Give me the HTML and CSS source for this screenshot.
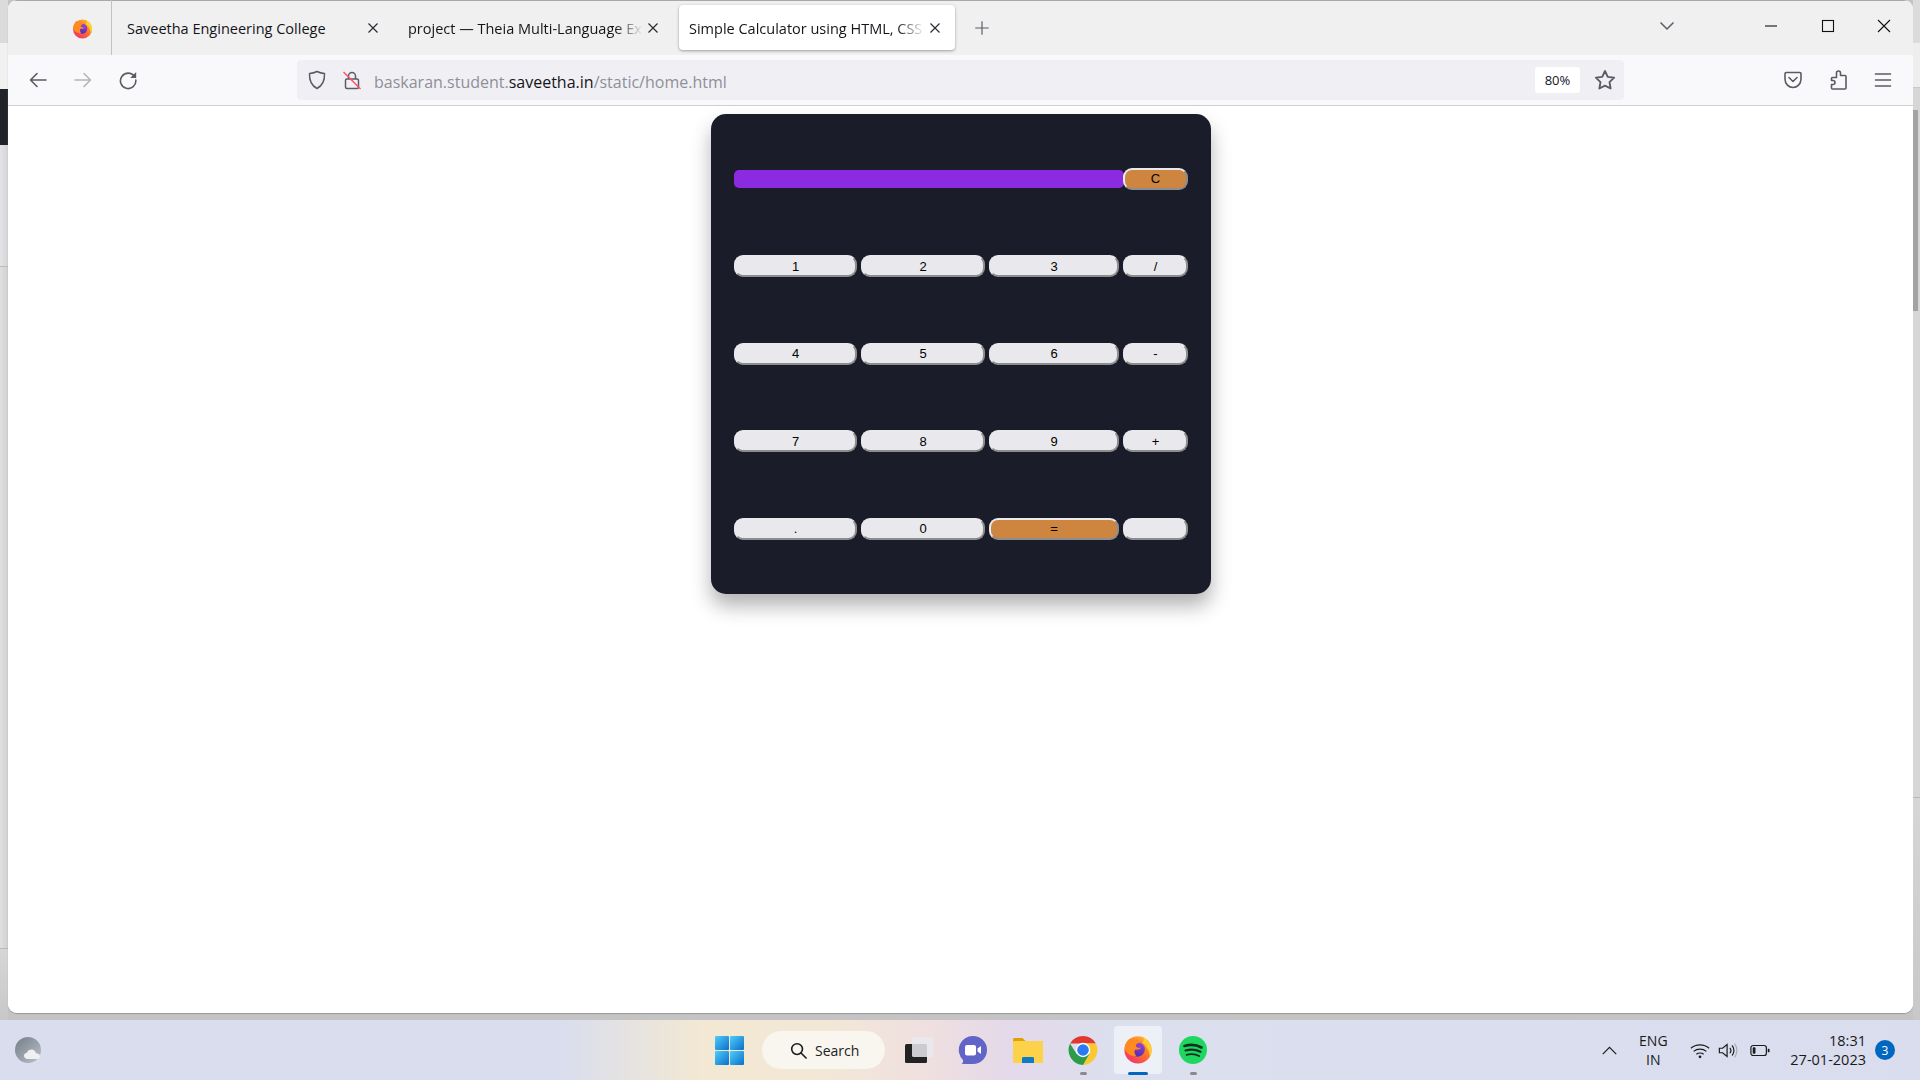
FILE: index.html
```html
<!DOCTYPE html>
<html lang="en">
<head>
<meta charset="utf-8">
<title>Simple Calculator using HTML, CSS and JavaScript</title>
<link rel="stylesheet" href="styles.css">
</head>
<body>
<svg class="defs" aria-hidden="true">
  <defs>
    <linearGradient id="ffBody" x1="0.85" y1="0.05" x2="0.2" y2="0.95">
      <stop offset="0" stop-color="#ffb52e"/><stop offset="0.5" stop-color="#ff7426"/><stop offset="1" stop-color="#f0326e"/>
    </linearGradient>
    <linearGradient id="ffCore" x1="0.7" y1="0" x2="0.3" y2="1">
      <stop offset="0" stop-color="#9a45d8"/><stop offset="1" stop-color="#4a2bb0"/>
    </linearGradient>
    <linearGradient id="winG" x1="0" y1="0" x2="1" y2="1">
      <stop offset="0" stop-color="#4fcdfb"/><stop offset="1" stop-color="#0a6fc9"/>
    </linearGradient>
    <linearGradient id="wxG" x1="0" y1="0" x2="1" y2="1">
      <stop offset="0" stop-color="#737c86"/><stop offset="1" stop-color="#bcc2ca"/>
    </linearGradient>
    <symbol id="firefox" viewBox="0 0 32 32">
      <circle cx="16" cy="17.500" r="14.500" fill="url(#ffBody)"/>
      <path d="M21 1c.6 3 3.400 4.600 5.800 7.400 2.200 2.600 3.700 5.700 3.700 9.100 0 2.600-.7 5-1.900 7-.2-5.400-2.600-11-7.600-14.500C22.600 7.400 22.400 4 21 1z" fill="#ffd02f"/>
      <circle cx="15.500" cy="17" r="7.800" fill="url(#ffCore)"/>
      <path d="M2 14c.8-4 2.800-7 5.800-9-.4 1.600-.2 3 .6 4 1.800-1.400 4.200-2 6.800-1.800 2.400.2 4.600 1.200 6 2.800-2-.6-4.400-.4-6 .6-1.400.9-1.800 2.400-1 3.400 1 1.200 3.200 1.400 5.200.9-1.200 1.900-4 2.800-6.400 2.200-1.400 1.900-.8 5 1.400 7.100C7 24 1.400 19.400 2 14z" fill="#ff8a1f"/>
    </symbol>
  </defs>
</svg>

<div class="desk">
  <div class="strip strip-left">
    <div class="seg seg-top"></div>
    <div class="seg seg-light"></div>
    <div class="seg seg-black"></div>
    <div class="seg seg-a"></div>
    <div class="seg seg-b"></div>
    <div class="seg seg-c"></div>
  </div>

  <main class="window">
    <div class="tabbar">
      <div class="pin">
        <svg class="fav"><use href="#firefox"/></svg>
      </div>
      <div class="tab tab-one">
        <span class="label">Saveetha Engineering College</span>
        <svg class="x" viewBox="0 0 16 16"><path d="M3.500 3.500l9 9M12.500 3.500l-9 9"/></svg>
      </div>
      <div class="tab tab-two">
        <span class="label label-fade">project — Theia Multi-Language Extension</span>
        <svg class="x" viewBox="0 0 16 16"><path d="M3.500 3.500l9 9M12.500 3.500l-9 9"/></svg>
      </div>
      <div class="tab tab-active">
        <span class="label label-fade">Simple Calculator using HTML, CSS and JavaScript</span>
        <svg class="x" viewBox="0 0 16 16"><path d="M3.500 3.500l9 9M12.500 3.500l-9 9"/></svg>
      </div>
      <svg class="plus" viewBox="0 0 20 20"><path d="M10 2.500v15M2.500 10h15"/></svg>
      <svg class="chev" viewBox="0 0 20 20"><path d="M3.500 6.500L10 13l6.500-6.500"/></svg>
      <div class="controls">
        <div class="ctl"><svg viewBox="0 0 14 14"><path d="M1 7h12"/></svg></div>
        <div class="ctl"><svg viewBox="0 0 14 14"><rect x="1.500" y="1.500" width="11" height="11"/></svg></div>
        <div class="ctl"><svg viewBox="0 0 14 14"><path d="M1 1l12 12M13 1L1 13"/></svg></div>
      </div>
    </div>

    <div class="toolbar">
      <div class="tbtn"><svg viewBox="0 0 20 20"><path d="M18 10H2.500M9 3.500L2.500 10 9 16.500"/></svg></div>
      <div class="tbtn tbtn-off"><svg viewBox="0 0 20 20"><path d="M2 10h15.500M11 3.500l6.500 6.500-6.500 6.500"/></svg></div>
      <div class="tbtn"><svg viewBox="0 0 20 20"><path d="M16.500 6.500A7.700 7.700 0 1 0 17.800 10"/><path class="solid" d="M18.200 2v6h-6z"/></svg></div>

      <div class="urlbar">
        <svg class="uicon" viewBox="0 0 20 20"><path d="M10 1.500c2.500 1.300 5 1.900 7.500 2 .3 6.500-1.500 11.800-7.500 15-6-3.200-7.800-8.500-7.500-15 2.500-.1 5-.7 7.500-2z"/></svg>
        <svg class="uicon lock" viewBox="0 0 20 20">
          <path d="M6.500 9V6a3.500 3.500 0 0 1 7 0v3"/>
          <rect x="3.500" y="9" width="13" height="9.500" rx="1.500"/>
          <path class="slash" d="M1.500 2l17 17"/>
        </svg>
        <span class="url">baskaran.student.<b class="host">saveetha.in</b>/static/home.html</span>
        <span class="zoom">80%</span>
        <svg class="star" viewBox="0 0 20 20"><path d="M10 1.800l2.500 5.300 5.800.8-4.200 4 1 5.800L10 15.100l-5.100 2.600 1-5.800-4.200-4 5.800-.8z"/></svg>
      </div>

      <div class="tright">
        <div class="tbtn"><svg viewBox="0 0 20 20"><path d="M3.200 2.500h13.600c.7 0 1.200.5 1.200 1.200V9c0 5-3.800 8.500-8 8.500S2 14 2 9V3.700c0-.7.500-1.200 1.200-1.200z"/><path d="M6 7.500l4 4 4-4"/></svg></div>
        <div class="tbtn"><svg viewBox="0 0 20 20"><path d="M8.500 4.500V3a2 2 0 0 1 4 0v2.500h4.500a1 1 0 0 1 1 1V18a1 1 0 0 1-1 1H4.500a1 1 0 0 1-1-1v-3.500H5a2 2 0 0 0 0-4H3.500V8.500a1 1 0 0 1 1-1h4z"/></svg></div>
        <div class="tbtn"><svg viewBox="0 0 20 20"><path d="M2.500 4h15M2.500 10h15M2.500 16h15"/></svg></div>
      </div>
    </div>

    <div class="content">
      <section class="calc">
        <div class="display"></div>
        <button class="key key-hot">C</button>
        <button class="key">1</button>
        <button class="key">2</button>
        <button class="key">3</button>
        <button class="key">/</button>
        <button class="key">4</button>
        <button class="key">5</button>
        <button class="key">6</button>
        <button class="key">-</button>
        <button class="key">7</button>
        <button class="key">8</button>
        <button class="key">9</button>
        <button class="key">+</button>
        <button class="key">.</button>
        <button class="key">0</button>
        <button class="key key-hot">=</button>
        <button class="key"></button>
      </section>
    </div>
  </main>

  <div class="strip strip-right">
    <div class="seg seg-top"></div>
    <div class="seg seg-r1"></div>
    <div class="seg seg-r2"></div>
    <div class="seg seg-thumb"></div>
    <div class="seg seg-b"></div>
    <div class="seg seg-c"></div>
  </div>
</div>

<footer class="taskbar">
  <div class="tb-left">
    <svg class="weather" viewBox="0 0 28 28">
      <circle cx="13" cy="14" r="13" fill="url(#wxG)"/>
      <path d="M13 23c-2.500 0-4-1.500-4-3.200 0-1.700 1.300-2.900 3-3 .7-2 2.500-3.200 4.500-3.200 2.300 0 4.200 1.500 4.500 3.600 2 0 4 .8 4 3 0 1.900-1.500 2.800-3.500 2.800z" fill="#eef0f3"/>
    </svg>
  </div>

  <div class="tb-center">
    <div class="tile">
      <svg class="win" viewBox="0 0 29 29">
        <rect x="0" y="0" width="14" height="14" rx="1" fill="url(#winG)"/>
        <rect x="15" y="0" width="14" height="14" rx="1" fill="url(#winG)"/>
        <rect x="0" y="15" width="14" height="14" rx="1" fill="url(#winG)"/>
        <rect x="15" y="15" width="14" height="14" rx="1" fill="url(#winG)"/>
      </svg>
    </div>
    <div class="searchpill">
      <svg class="mag" viewBox="0 0 18 18"><circle cx="7.500" cy="7.500" r="5.700"/><path d="M11.700 11.700L17 17"/></svg>
      <span>Search</span>
    </div>
    <div class="tile">
      <svg class="app" viewBox="0 0 30 30">
        <rect x="2" y="9" width="22" height="19" rx="1.500" fill="#222"/>
        <rect x="9" y="2" width="21" height="20" rx="1.500" fill="#e9e9ee" fill-opacity=".85"/>
      </svg>
    </div>
    <div class="tile">
      <svg class="app" viewBox="0 0 30 30">
        <path d="M15 1a14 14 0 0 1 0 28H3.500c1.400-1 1.800-2.500 1.500-4A14 14 0 0 1 15 1z" fill="#6264c8"/>
        <rect x="7" y="10" width="11" height="10.500" rx="2" fill="#fff"/>
        <path d="M19.500 13.500l3.500-2.500v8l-3.500-2.500z" fill="#fff"/>
      </svg>
    </div>
    <div class="tile">
      <svg class="app" viewBox="0 0 30 30">
        <path d="M0 4.500c0-.8.700-1.500 1.500-1.500h8l3 3H30v5H0z" fill="#dfa205"/>
        <rect x="0" y="6" width="30" height="22" rx="1" fill="#fdd24b"/>
        <path d="M9 28v-4.500c0-1 .7-1.500 1.500-1.500h9c.8 0 1.500.5 1.500 1.500V28z" fill="#0f7bc4"/>
      </svg>
    </div>
    <div class="tile">
      <svg class="app" viewBox="0 0 30 30">
        <path d="M2 8.500A15 15 0 0 1 28 8.500H15z" fill="#e3382f"/>
        <path d="M28 8.500A15 15 0 0 1 15 30l6.500-11.250A7.500 7.500 0 0 0 15 8.500z" fill="#fcc934"/>
        <path d="M2 8.500A15 15 0 0 0 15 30l6.500-11.250-13 0z" fill="#2c9c4b"/>
        <circle cx="15" cy="15" r="7.200" fill="#fff"/>
        <circle cx="15" cy="15" r="5.800" fill="#2a7bf0"/>
      </svg>
      <i class="dot"></i>
    </div>
    <div class="tile tile-on">
      <svg class="app app-big"><use href="#firefox"/></svg>
      <i class="dot dot-blue"></i>
    </div>
    <div class="tile">
      <svg class="app" viewBox="0 0 30 30">
        <circle cx="15" cy="15" r="14" fill="#1ed760"/>
        <path class="sp sp1" d="M6.500 11c5.500-1.700 12-1.300 17 1.500"/>
        <path class="sp sp2" d="M7.500 15.500c5-1.400 10.500-1 15 1.300"/>
        <path class="sp sp3" d="M8.500 19.800c4.500-1.100 9-.8 12.700 1.200"/>
      </svg>
      <i class="dot"></i>
    </div>
  </div>

  <div class="tray">
    <svg class="tchev" viewBox="0 0 18 10"><path d="M1.500 9L9 1.500 16.500 9"/></svg>
    <div class="lang"><span>ENG</span><span>IN</span></div>
    <svg class="ticon" viewBox="0 0 22 18"><path d="M1 6.500c5.500-5 14.500-5 20 0M4 10c3.800-3.400 10.200-3.400 14 0M7 13.200c2.200-1.800 5.800-1.800 8 0"/><circle class="solid" cx="11" cy="16" r="1.500"/></svg>
    <svg class="ticon" viewBox="0 0 22 18"><path d="M1.500 6.500h3.500L10 2.500v13L5 11.500H1.500zM13 6c1.400 1.700 1.400 4.300 0 6M15.500 3.500c2.700 3 2.700 8 0 11"/><path class="faint" d="M18.300 1.500c3.200 4.300 3.200 10.700 0 15"/></svg>
    <svg class="ticon batt" viewBox="0 0 22 14"><rect x="1" y="1.500" width="17" height="11" rx="2.500"/><rect class="solid" x="3" y="3.500" width="3" height="7" rx="1"/><path class="solid" d="M19.500 5h1a1 1 0 0 1 1 1v2a1 1 0 0 1-1 1h-1z"/></svg>
    <div class="clock"><span>18:31</span><span>27-01-2023</span></div>
    <span class="badge">3</span>
  </div>
</footer>
</body>
</html>
```

FILE: styles.css
```css
* { box-sizing: border-box; }

html, body { margin: 0; padding: 0; }

body {
  width: 1920px;
  height: 1080px;
  overflow: hidden;
  display: flex;
  flex-direction: column;
  font-family: "Open Sans", "Liberation Sans", sans-serif;
  background: #d9ddee;
}

.defs { display: block; width: 0; height: 0; }

/* Desktop area behind the browser */
.desk {
  height: 1020px;
  display: flex;
  background: #c4c4c4;
}

.strip { display: flex; flex-direction: column; flex: none; height: 1020px; }
.strip-left { width: 8px; }
.strip-right { width: 7px; }

.seg-top { height: 43px; background: #dbdbdb; }
.seg-light { height: 46px; background: #f1f1f1; }
.seg-black { height: 56px; background: #202327; }
.seg-a { height: 122px; background: linear-gradient(90deg, #e4e4e6, #d4d4d6); border-bottom: 1px solid #bdbdbd; }
.seg-b { height: 682px; background: linear-gradient(90deg, #e0e0e0, #d0d0d0); border-bottom: 1px solid #b9b9b9; }
.seg-c { flex: 1; background: linear-gradient(#d6d6d6, #c8c8c8); }

.seg-r1 { height: 45px; background: #eeeeee; border-bottom: 1px solid #c9c9c9; }
.seg-r2 { height: 22px; background: #d6d6d6; }
.seg-thumb { height: 201px; background: #d6d6d6; border-left: 5px solid #a3a3a3; }
.strip-right .seg-b { height: 487px; background: #d6d6d6; }

/* Browser window */
.window {
  width: 1905px;
  height: 1013px;
  display: flex;
  flex-direction: column;
  background: #fff;
  border-radius: 9px;
  overflow: hidden;
  box-shadow: 0 1px 1px #9a9a9a;
}

.tabbar {
  height: 55px;
  flex: none;
  display: flex;
  align-items: stretch;
  padding: 4px 0 5px;
  background: #f0f0f0;
  border-top: 1px solid #a8a8a8;
  font-size: 14.500px;
  color: #15141a;
}

.pin {
  width: 104px;
  flex: none;
  margin: -5px 0 -5px;
  border-right: 1px solid #c3c3c3;
  display: flex;
  align-items: center;
  padding-left: 64px;
}
.fav { width: 21px; height: 22px; display: block; }

.tab { display: flex; align-items: center; flex: none; }
.tab-one { width: 284px; padding: 0 13px 0 15px; }
.tab-two { width: 270px; padding: 0 3px 0 12px; }
.tab-active {
  width: 276px;
  margin-left: 13px;
  padding: 0 10px;
  background: #fff;
  border-radius: 4px;
  box-shadow: 0 1px 3px rgba(0, 0, 0, .35);
}

.label { flex: 1; min-width: 0; padding-top: 2px; white-space: nowrap; overflow: hidden; }
.label-fade {
  -webkit-mask-image: linear-gradient(90deg, #000 calc(100% - 28px), transparent);
  mask-image: linear-gradient(90deg, #000 calc(100% - 28px), transparent);
}

.x { width: 20px; height: 16px; flex: none; fill: none; stroke: #2b2a33; stroke-width: 1.200; }

.plus { width: 18px; height: 18px; flex: none; align-self: center; margin-left: 18px; fill: none; stroke: #5b5b66; stroke-width: 1.300; }

.chev { width: 20px; height: 20px; flex: none; align-self: center; margin: 0 0 4px 666px; fill: none; stroke: #5b5b66; stroke-width: 1.500; }

.controls { display: flex; flex: none; margin-left: 66px; margin-bottom: 3px; }
.ctl { width: 56.500px; display: flex; align-items: center; justify-content: center; }
.ctl svg { width: 14px; height: 14px; fill: none; stroke: #111; stroke-width: 1.100; }

.toolbar {
  height: 51px;
  flex: none;
  display: flex;
  align-items: center;
  padding: 0 8px 0 7px;
  background: #f9f9fb;
  border-bottom: 1px solid #cfcfd8;
}

.tbtn { width: 45px; height: 40px; flex: none; display: flex; align-items: center; justify-content: center; }
.tbtn svg { width: 20px; height: 20px; fill: none; stroke: #5b5b66; stroke-width: 1.600; stroke-linejoin: round; stroke-linecap: round; }
.tbtn-off svg { stroke: #b4b4ba; }
.tbtn .solid { fill: #5b5b66; stroke: none; }

.urlbar {
  width: 1327px;
  height: 40px;
  margin-left: 147px;
  display: flex;
  align-items: center;
  padding: 0 8px 0 10px;
  background: #f0f0f4;
  border-radius: 4px;
}

.uicon { width: 20px; height: 20px; flex: none; fill: none; stroke: #5b5b66; stroke-width: 1.500; stroke-linejoin: round; }
.lock { margin-left: 15px; }
.lock .slash { stroke: #ff4f5e; stroke-width: 1.500; }

.url { margin-left: 12px; padding-top: 3px; font-size: 16px; color: #8f8f98; white-space: nowrap; }
.host { font-weight: 400; color: #15141a; }

.zoom {
  width: 45px;
  height: 26px;
  margin-left: auto;
  display: flex;
  align-items: center;
  justify-content: center;
  background: #fff;
  border-radius: 3px;
  font-size: 13px;
  color: #15141a;
}

.star { width: 22px; height: 22px; flex: none; margin-left: 14px; fill: none; stroke: #5b5b66; stroke-width: 1.700; stroke-linejoin: round; }

.tright { display: flex; margin-left: auto; }

.content {
  flex: 1;
  display: flex;
  justify-content: center;
  align-items: flex-start;
  padding: 8px 0 0 1px;
  background: #fff;
}

/* Calculator */
.calc {
  width: 500px;
  height: 480px;
  display: grid;
  grid-template-columns: 123px 124px 130px 65px;
  grid-auto-rows: 22px;
  column-gap: 4px;
  row-gap: 65.500px;
  padding: 53.900px 23px;
  background: #1a1c29;
  border-radius: 15px;
  box-shadow: 0 12px 20px rgba(0, 0, 0, .3);
}

.display {
  grid-column: span 3;
  height: 18px;
  margin: 2px -5px 0 0;
  background: #8a2be2;
  border-radius: 5px;
}

.key {
  position: relative;
  padding: 0;
  height: 22px;
  border: 2px solid;
  border-color: #e9e9ed #8d8d8d #8d8d8d #e9e9ed;
  border-radius: 9px;
  background: #e9e9ed;
  color: #000;
  font: 13px "Liberation Sans", Arial, sans-serif;
}

.key-hot { background: #cd853f; }

/* Taskbar */
.taskbar {
  height: 60px;
  flex: none;
  display: flex;
  align-items: center;
  background: linear-gradient(90deg, #d9ddee 0, #d9ddee 560px, #f2e8d3 700px, #f3e8d6 820px, #efdfe0 930px, #e4d9ea 1010px, #dcdfee 1110px, #d9ddee 100%);
}

.tb-left { width: 702px; flex: none; padding-left: 15px; display: flex; }
.weather { width: 28px; height: 28px; }

.tb-center { display: flex; align-items: center; }

.tile {
  position: relative;
  width: 55px;
  height: 48px;
  display: flex;
  align-items: center;
  justify-content: center;
}

.tile-on::before {
  content: "";
  position: absolute;
  left: 3.500px;
  top: 0;
  width: 48px;
  height: 48px;
  background: #eef0f8;
  border-radius: 4px;
}

.win { width: 29px; height: 29px; }
.app { width: 30px; height: 30px; position: relative; }
.app-big { width: 30px; height: 31px; margin-bottom: 3px; }

.dot {
  position: absolute;
  left: 24.500px;
  bottom: -1px;
  width: 7px;
  height: 3px;
  border-radius: 2px;
  background: #8a8a8e;
}
.dot-blue { left: 17.500px; width: 20px; background: #0067c0; }

.sp { fill: none; stroke: #12301d; stroke-linecap: round; }
.sp1 { stroke-width: 2.600; }
.sp2 { stroke-width: 2.200; }
.sp3 { stroke-width: 1.800; }

.searchpill {
  width: 123px;
  height: 38px;
  margin: 0 5px;
  display: flex;
  align-items: center;
  padding-left: 28px;
  gap: 8px;
  background: #f9f5ef;
  border-radius: 19px;
  font-size: 14px;
  color: #222;
}
.mag { width: 17px; height: 17px; fill: none; stroke: #1c1c1c; stroke-width: 1.700; stroke-linecap: round; }

.tray { margin-left: auto; display: flex; align-items: center; padding-right: 25px; color: #1a1a1a; font-size: 14px; }

.tchev { width: 17px; height: 9px; fill: none; stroke: #1a1a1a; stroke-width: 1.300; margin-right: 18px; }

.lang { display: flex; flex-direction: column; align-items: center; line-height: 19px; width: 34px; margin-right: 20px; }

.ticon { width: 20px; height: 17px; flex: none; margin-right: 8px; fill: none; stroke: #1a1a1a; stroke-width: 1.300; }
.ticon .solid { fill: #1a1a1a; stroke: none; }
.ticon .faint { stroke: #a9abb5; }
.batt { margin: 0 20px 0 4px; }

.clock { display: flex; flex-direction: column; align-items: flex-end; font-size: 14.500px; line-height: 19px; }

.badge {
  width: 20px;
  height: 20px;
  margin-left: 9px;
  display: flex;
  align-items: center;
  justify-content: center;
  border-radius: 50%;
  background: #0067c0;
  color: #fff;
  font-size: 12px;
}
```
